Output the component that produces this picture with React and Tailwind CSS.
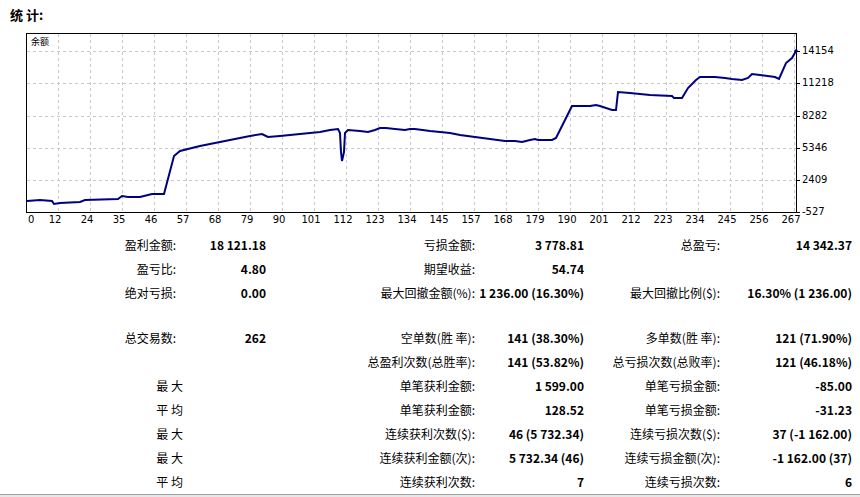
const pts = "27,201 40,200 52,201 54,204 60,203 80,202 85,200 118,199 122,196 128,197 140,197 152,194 164,194 174,156 180,151 200,146 230,140 250,136 262,134 266,136 268,137 280,136 300,134 310,133 320,132 330,130 338,129 340,133 341,152 342,161 344,152 345,133 348,130 360,131 368,132 375,130 380,128 386,128 395,129 405,130 410,129 415,129 430,131 450,133 460,135 475,137 490,139 505,141 515,141 522,142 530,140 535,139 538,140 552,140 556,138 560,130 572,106 590,106 596,105 600,106 612,110 616,110 618,92 630,93 650,95 672,96 674,98 682,98 688,88 696,80 700,77 715,77 725,78 732,79 742,80 748,78 752,74 760,75 775,77 779,79 786,63 792,58 796,51";
const xl = ["0","12","24","35","46","57","68","79","90","101","112","123","134","145","157","168","179","190","201","212","223","234","245","256","267"];
const yl = [["14154",51],["11218",83],["8282",116],["5346",148],["2409",180],["-527",212]];
const F = { fontFamily: '"Noto Sans CJK SC", sans-serif' };

function Row({ cells, special }) {
  return (
    <div className="flex h-[24px] items-center text-[12px] text-black whitespace-nowrap">
      <div className={special ? "w-[183px] text-right" : "w-[176px] text-right"}>{cells[0]}</div>
      <div className={special ? "w-[83px] text-right font-bold" : "w-[90px] text-right font-bold"}>{cells[1]}</div>
      <div className="w-[209px] text-right">{cells[2]}</div>
      <div className="w-[109px] text-right font-bold">{cells[3]}</div>
      <div className="w-[136px] text-right">{cells[4]}</div>
      <div className="w-[132px] text-right font-bold">{cells[5]}</div>
    </div>
  );
}

export default function App() {
  return (
    <div className="w-[860px] h-[497px] bg-white relative overflow-hidden" style={F}>
      <div className="pl-[10px] pt-[5px] h-[33px] text-[13px] font-bold">统 计:</div>
      <svg width="860" height="200" viewBox="0 33 860 200" className="block">
        <rect x="26.5" y="33.5" width="770" height="179" fill="white" stroke="black" />
        {[51, 83, 116, 148, 180].map((y) => (
          <line key={y} x1="27" x2="796" y1={y + 0.5} y2={y + 0.5} stroke="#c8c8c8" strokeDasharray="3 3" />
        ))}
        {Array.from({ length: 24 }, (_, i) => 58 + i * 32).map((x) => (
          <line key={x} x1={x + 0.5} x2={x + 0.5} y1="34" y2="212" stroke="#c8c8c8" strokeDasharray="3 3" />
        ))}
        <text x="31" y="45" fontSize="9" fill="#000">余额</text>
        <polyline points={pts} fill="none" stroke="#000080" strokeWidth="2" />
        <circle cx="796" cy="51" r="1.8" fill="#000080" />
        {yl.map(([t, y]) => (
          <g key={t}>
            <line x1="797" x2="800" y1={y + 0.5} y2={y + 0.5} stroke="black" />
            <text x="802" y={y + 3} fontSize="10" fontFamily="Tahoma, 'DejaVu Sans', sans-serif">{t}</text>
          </g>
        ))}
        {xl.map((t, i) => (
          <text key={t} x={i === 0 ? 28 : 55 + (i - 1) * 32} y="223" fontSize="10" textAnchor={i === 0 ? "start" : "middle"} fontFamily="Tahoma, 'DejaVu Sans', sans-serif">{t}</text>
        ))}
      </svg>
      <div>
        <Row cells={["盈利金额:", "18 121.18", "亏损金额:", "3 778.81", "总盈亏:", "14 342.37"]} />
        <Row cells={["盈亏比:", "4.80", "期望收益:", "54.74", "", ""]} />
        <Row cells={["绝对亏损:", "0.00", "最大回撤金额(%):", "1 236.00 (16.30%)", "最大回撤比例($):", "16.30% (1 236.00)"]} />
        <div className="h-[21px]" />
        <Row cells={["总交易数:", "262", "空单数(胜 率):", "141 (38.30%)", "多单数(胜 率):", "121 (71.90%)"]} />
        <Row cells={["", "", "总盈利次数(总胜率):", "141 (53.82%)", "总亏损次数(总败率):", "121 (46.18%)"]} />
        <Row special cells={["最 大", "", "单笔获利金额:", "1 599.00", "单笔亏损金额:", "-85.00"]} />
        <Row special cells={["平 均", "", "单笔获利金额:", "128.52", "单笔亏损金额:", "-31.23"]} />
        <Row special cells={["最 大", "", "连续获利次数($):", "46 (5 732.34)", "连续亏损次数($):", "37 (-1 162.00)"]} />
        <Row special cells={["最 大", "", "连续获利金额(次):", "5 732.34 (46)", "连续亏损金额(次):", "-1 162.00 (37)"]} />
        <Row special cells={["平 均", "", "连续获利次数:", "7", "连续亏损次数:", "6"]} />
      </div>
      <div className="absolute left-0 right-0 bottom-0 h-[3px] border-t border-[#a0a0a0] bg-[#e8e8e8]" />
    </div>
  );
}
